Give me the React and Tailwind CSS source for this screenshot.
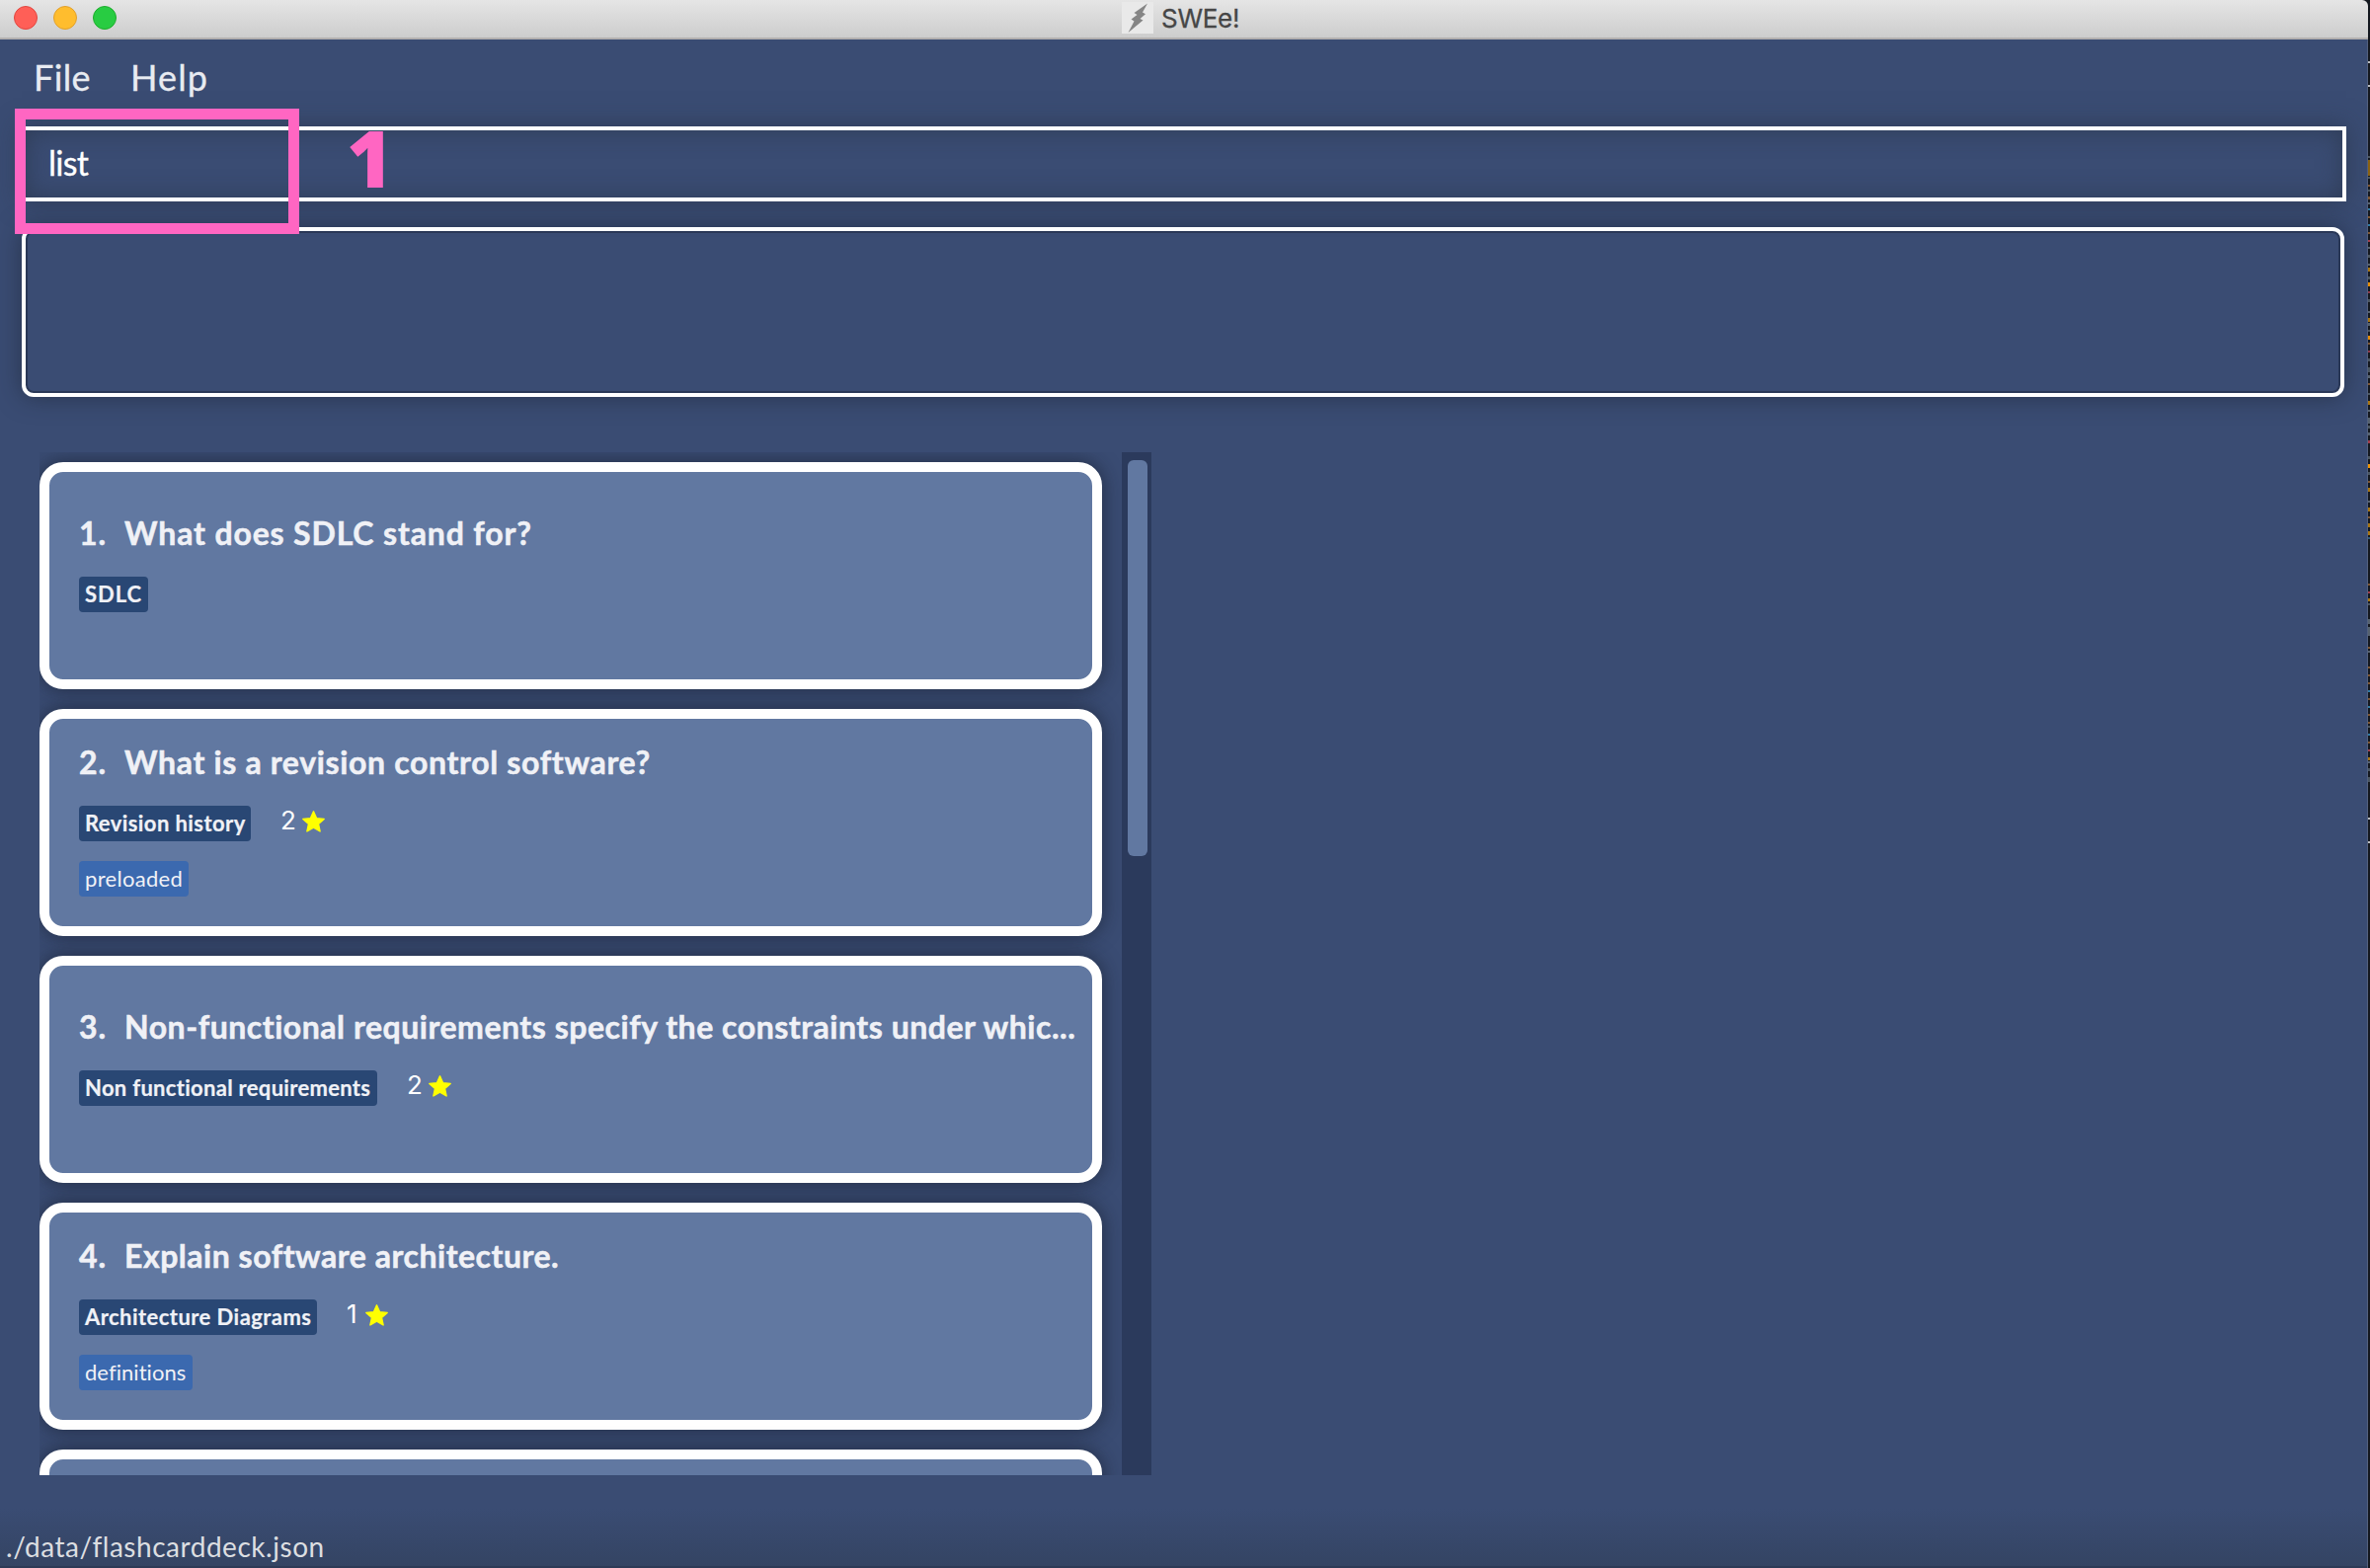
import React from "react";

const LATO = "font-['Lato',sans-serif]";

const CARDS = [
  {
    id: 1,
    question: "What does SDLC stand for?",
    questionSpacing: "tracking-[0.85px]",
    topic: "SDLC",
    topicSpacing: "tracking-[0.95px]",
    topicWidth: "w-[70px]",
  },
  {
    id: 2,
    question: "What is a revision control software?",
    questionSpacing: "tracking-[0.66px]",
    topic: "Revision history",
    topicSpacing: "tracking-[0.42px]",
    topicWidth: "w-[174px]",
    priority: 2,
    tag: "preloaded",
    tagSpacing: "tracking-[0.3px]",
    tagWidth: "w-[111px]",
  },
  {
    id: 3,
    question: "Non-functional requirements specify the constraints under whic...",
    questionSpacing: "tracking-[0.53px]",
    topic: "Non functional requirements",
    topicSpacing: "tracking-[0.3px]",
    topicWidth: "w-[302px]",
    priority: 2,
  },
  {
    id: 4,
    question: "Explain software architecture.",
    questionSpacing: "tracking-[0.52px]",
    topic: "Architecture Diagrams",
    topicSpacing: "tracking-[0.45px]",
    topicWidth: "w-[241px]",
    priority: 1,
    tag: "definitions",
    tagSpacing: "tracking-[0.05px]",
    tagWidth: "w-[115px]",
  },
];

function Star() {
  return (
    <svg width="23" height="22" viewBox="0 0 23 22" className="-mt-px shrink-0 overflow-visible">
      <path
        d="M11.5 0.8 L14.6 7.7 L22.2 8.4 L16.5 13.4 L18.1 21 L11.5 17.1 L4.9 21 L6.5 13.4 L0.8 8.4 L8.4 7.7 Z"
        fill="#ffff00"
        stroke="#ffff00"
        strokeWidth="1.4"
        strokeLinejoin="round"
      />
    </svg>
  );
}

function Card({ card }) {
  return (
    <div className="h-[230px] w-[1076px] shrink-0 rounded-[24px] border-[10px] border-white bg-[#6178a1] shadow-[0_0_20px_rgba(20,26,40,0.65)]">
      {card && (
        <div className={`flex flex-col pl-[30px] ${card.tag ? "pt-[22px]" : "pt-10"}`}>
          <div className={`flex h-11 items-center whitespace-pre text-[32px] leading-[44px] font-bold text-[#f0f1f6] [-webkit-text-stroke:0.5px_#f0f1f6] ${LATO}`}>
            <span className="w-[46px] shrink-0 tracking-[1px]">{card.id}.</span>
            <span className={card.questionSpacing}>{card.question}</span>
          </div>
          <div className="mt-[22px] flex h-9 items-start">
            <span
              className={`h-9 shrink-0 rounded-[4px] bg-[#294774] pl-1.5 text-[22px] leading-[35px] font-bold whitespace-pre text-[#f0f1f6] [-webkit-text-stroke:0.2px_#f0f1f6] ${LATO} ${card.topicSpacing} ${card.topicWidth}`}
            >
              {card.topic}
            </span>
            {card.priority && (
              <span className="ml-[30px] flex h-8 items-center font-['Inter',sans-serif] text-[26px] leading-8 text-white">
                <span className={`-mt-0.5 ${card.priority === 1 ? "w-[19px]" : "w-[22px]"}`}>{card.priority}</span>
                <Star />
              </span>
            )}
          </div>
          {card.tag && (
            <span
              className={`mt-5 h-9 rounded-[4px] bg-[#3b69af] pl-1.5 text-[22px] leading-[35px] whitespace-pre text-[#f0f1f6] ${LATO} ${card.tagSpacing} ${card.tagWidth}`}
            >
              {card.tag}
            </span>
          )}
        </div>
      )}
    </div>
  );
}

function TitleBar() {
  return (
    <div className="flex h-10 shrink-0 items-start rounded-tr-[6px] border-b-2 border-[#b2afae] bg-linear-to-b from-[#e5e5e5] to-[#cdcdcd]">
      <div className="flex gap-4 pt-1.5 pl-3.5">
        <span className="size-6 rounded-full border border-[#e2463f] bg-[#ff5f57]" />
        <span className="size-6 rounded-full border border-[#e1a02b] bg-[#ffbd2e]" />
        <span className="size-6 rounded-full border border-[#1dad2c] bg-[#28cc42]" />
      </div>
      <div className="mt-0.5 ml-[1018px] flex h-8 items-center">
        <svg width="32" height="32" viewBox="0 0 32 32">
          <rect width="32" height="32" fill="#e9e9e9" />
          <path d="M26 1.5 L12.5 11 L15.5 13 L9.5 17.5 L12.5 19.5 L6.5 31 L21.5 18.5 L18.5 17 L24 12.2 L21 10.5 Z" fill="#858585" />
        </svg>
        <span className="mt-0.5 ml-2 font-['Inter',sans-serif] text-[26px] leading-8 tracking-[-0.3px] text-[#464646] [-webkit-text-stroke:0.3px_#464646]">SWEe!</span>
      </div>
    </div>
  );
}

const SPECKS = [
  [62, 2, "#b9bcc0"], [86, 2, "#b9bcc0"], [158, 2, "#4a5560"], [162, 16, "#8a6212"], [179, 2, "#4a5560"],
  [187, 2, "#7d5532"], [192, 2, "#4a5560"], [199, 3, "#7d5532"], [205, 2, "#56626f"], [211, 2, "#2f7aa5"],
  [219, 2, "#7d5532"], [227, 2, "#2f7aa5"], [235, 2, "#7d5532"], [243, 2, "#a03c4c"], [250, 2, "#56626f"],
  [258, 3, "#4a5560"], [267, 2, "#56626f"], [271, 4, "#a87410"], [280, 3, "#4a5560"], [286, 4, "#e88d05"],
  [295, 2, "#8c3a4c"], [303, 3, "#4a5560"], [315, 2, "#56626f"], [322, 4, "#a87410"], [327, 3, "#56626f"],
  [334, 2, "#4a5560"], [340, 4, "#e88d05"], [347, 2, "#7d5532"], [355, 2, "#8c3a4c"], [363, 3, "#4a5560"],
  [372, 5, "#4a5560"], [380, 3, "#56626f"], [388, 2, "#7d5532"], [398, 2, "#4a5560"], [406, 4, "#a87410"],
  [415, 2, "#56626f"], [423, 6, "#56626f"], [431, 3, "#4a5560"], [438, 3, "#56626f"], [446, 3, "#a03c4c"],
  [462, 3, "#4a5560"], [470, 4, "#f29400"], [478, 3, "#4a5560"], [487, 2, "#7d5532"], [494, 4, "#a87410"],
  [507, 2, "#56626f"], [514, 4, "#a87410"], [523, 2, "#7d5532"], [530, 4, "#a87410"], [538, 4, "#a87410"],
  [544, 2, "#2f5a7d"], [591, 2, "#7d5532"], [599, 2, "#a03c4c"], [606, 3, "#a87410"], [611, 2, "#4a5560"],
  [627, 5, "#56626f"], [635, 9, "#56626f"], [655, 2, "#7d5532"], [659, 2, "#56626f"], [675, 2, "#7d5532"],
  [683, 2, "#7d5532"], [691, 2, "#7d5532"], [699, 2, "#2f7aa5"], [707, 2, "#7d5532"], [715, 2, "#2f7aa5"],
  [723, 2, "#7d5532"], [731, 2, "#7d5532"], [735, 2, "#4a5560"], [743, 2, "#2f7aa5"], [751, 2, "#7d5532"],
  [759, 2, "#a03c4c"], [767, 3, "#a87410"], [771, 2, "#56626f"], [778, 3, "#4a5560"], [787, 5, "#4a5560"],
  [828, 2, "#b9bcc0"], [852, 2, "#b9bcc0"],
];

function DesktopEdge() {
  return (
    <svg width="2" height="1588" viewBox="0 0 2 1588" className="shrink-0">
      <rect width="2" height="1588" fill="#14181f" />
      {SPECKS.map(([y, h, fill]) => (
        <rect key={y} x="0" y={y} width="2" height={h} fill={fill} />
      ))}
    </svg>
  );
}

export default function App() {
  return (
    <div className="relative flex h-[1588px] w-[2400px] overflow-hidden bg-[#14181f]">
      <div className="flex w-[2398px] shrink-0 flex-col">
        <TitleBar />
        <div className="flex min-h-0 flex-1 flex-col border-r border-[#53617f] bg-[#3a4c73]">
          <div className={`flex h-[88px] shrink-0 pt-[18px] pl-[34px] text-[36px] leading-10 text-[#e8ebf1] [-webkit-text-stroke:0.3px_#e8ebf1] ${LATO}`}>
            <span className="w-[98px] tracking-[0.4px]">File</span>
            <span className="tracking-[1.1px]">Help</span>
          </div>

          <div className="ml-[22px] flex h-[76px] w-[2354px] shrink-0 items-center border-4 border-white shadow-[0_0_24px_rgba(42,52,70,0.65),inset_0_0_24px_rgba(42,52,70,0.65)]">
            <span className={`-mt-0.5 pl-[23px] text-[34px] leading-10 tracking-[-0.7px] text-white [-webkit-text-stroke:0.3px_white] ${LATO}`}>list</span>
          </div>

          <div className="mt-[26px] ml-[22px] h-[172px] w-[2352px] shrink-0 rounded-[12px] border-4 border-white shadow-[0_0_24px_rgba(28,36,52,0.6),inset_0_0_0_2px_#2a3857]" />

          <div className="mt-14 flex h-[1036px] shrink-0 pl-10">
            <div className="flex h-full w-[1096px] flex-col gap-5 overflow-hidden pt-2.5">
              {CARDS.map((card) => (
                <Card key={card.id} card={card} />
              ))}
              <Card />
            </div>
            <div className="h-full w-[30px] bg-[#2b3a5c] pt-2 pr-1 pl-1.5">
              <div className="h-[401px] rounded-[6px] bg-[#6178a1]" />
            </div>
          </div>

          <div className="mt-auto flex h-[60px] shrink-0 items-center border-b-2 border-[#2d3a56] bg-linear-to-b from-[#3a4c73] to-[#344463] pt-[17px] pl-1.5">
            <span className={`text-[28px] leading-8 tracking-[0.53px] text-[#dcdee1] ${LATO}`}>./data/flashcarddeck.json</span>
          </div>
        </div>
      </div>
      <DesktopEdge />

      <div className="absolute top-[110px] left-[15px] h-[127px] w-[288px] border-[11px] border-[#ff66c2]" />
      <div className="absolute top-[119px] left-[351px] font-['Open_Sans',sans-serif] text-[80px] leading-[80px] font-extrabold text-[#ff66c2]">
        1
      </div>
    </div>
  );
}
